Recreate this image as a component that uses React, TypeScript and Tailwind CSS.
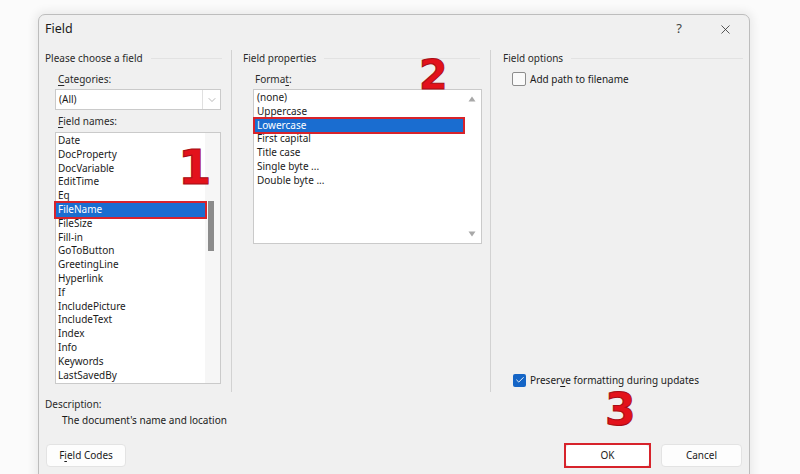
import React from 'react';
import { X, ChevronDown, Check } from 'lucide-react';

const fieldNames = [
  'Date', 'DocProperty', 'DocVariable', 'EditTime', 'Eq', 'FileName', 'FileSize', 'Fill-in',
  'GoToButton', 'GreetingLine', 'Hyperlink', 'If', 'IncludePicture', 'IncludeText', 'Index',
  'Info', 'Keywords', 'LastSavedBy',
];

const formats = ['(none)', 'Uppercase', 'Lowercase', 'First capital', 'Title case', 'Single byte ...', 'Double byte ...'];

const font = 'font-["Segoe_UI","Noto_Sans","Open_Sans",sans-serif]';
const bigNum =
  'absolute leading-none font-bold font-["DejaVu_Sans",sans-serif] text-[#e3121b] [-webkit-text-stroke:1px_#a90d14]';

const Item = ({ label, selected }: { label: string; selected: boolean }) => (
  <div
    className={`relative h-[13.8px] leading-[13.8px] pl-[2px] whitespace-nowrap ${
      selected ? 'bg-[#1a6dd0] text-white' : 'text-[#1b1b1b]'
    }`}
  >
    {label}
    {selected && <div className="absolute -inset-[2px] border-2 border-[#d7232b]" />}
  </div>
);

const GroupHeader = ({ title, className }: { title: string; className: string }) => (
  <div className={`flex h-[16px] items-center ${className}`}>
    <span className="text-[#2a2a2a]">{title}</span>
    <div className="ml-2 h-px flex-1 bg-[#e2e2e2]" />
  </div>
);

export default function App() {
  return (
    <div className={`relative h-[474px] w-[800px] overflow-hidden bg-[#fbfbfb] pl-[38px] pt-[14px] text-[10px] ${font}`}>
      <div className="flex h-[470px] w-[712px] flex-col rounded-t-[7px] border border-[#bdbdbd] bg-[#f0f0f0] shadow-[0_0_10px_3px_rgba(0,0,0,0.07)]">
        {/* title bar */}
        <div className="flex h-[28px] items-center pl-[6px] pr-[16px]">
          <span className="text-[12.5px] text-[#1b1b1b]">Field</span>
          <span className="ml-auto mr-[36px] text-[13px] text-[#444]">?</span>
          <X size={15} strokeWidth={1.3} className="text-[#333]" />
        </div>

        {/* columns */}
        <div className="flex h-[349px] pt-[7px]">
          {/* column 1 */}
          <div className="flex w-[193px] flex-col border-r border-[#d2d2d2]">
            <GroupHeader title="Please choose a field" className="pl-[6px] pr-[9px]" />
            <div className="mt-[5px] h-[16px] pl-[19px] leading-[16px] text-[#2a2a2a]">
              <u className="underline-offset-2">C</u>ategories:
            </div>
            <div className="ml-[16px] mt-[2px] flex h-[21px] w-[166px] border border-[#cacaca] bg-white">
              <span className="flex-1 pl-[3px] leading-[19px] text-[#1b1b1b]">(All)</span>
              <div className="flex w-[18px] items-center justify-center border-l border-[#e0e0e0]">
                <ChevronDown size={12} strokeWidth={1.2} className="text-[#8a8a8a]" />
              </div>
            </div>
            <div className="mt-[3px] h-[16px] pl-[19px] leading-[16px] text-[#2a2a2a]">
              <u className="underline-offset-2">F</u>ield names:
            </div>
            <div className="ml-[16px] mt-[3px] flex h-[252px] w-[166px] border border-[#cacaca] bg-white">
              <div className="flex-1 pt-[1px]">
                {fieldNames.map((n) => (
                  <Item key={n} label={n} selected={n === 'FileName'} />
                ))}
              </div>
              <div className="w-[15px] bg-[#f6f6f6] pl-[3px] pt-[68px]">
                <div className="h-[50px] w-[6px] bg-[#8b8b8b]" />
              </div>
            </div>
          </div>

          {/* column 2 */}
          <div className="flex w-[259px] flex-col border-r border-[#d2d2d2]">
            <GroupHeader title="Field properties" className="pl-[11px] pr-[10px]" />
            <div className="mt-[5px] h-[16px] pl-[23px] leading-[16px] text-[#2a2a2a]">
              Forma<u className="underline-offset-2">t</u>:
            </div>
            <div className="ml-[21px] mt-[2px] flex h-[155px] w-[229px] border border-[#cacaca] bg-white">
              <div className="flex-1 pl-[1px] pt-[1px]">
                {formats.map((n) => (
                  <Item key={n} label={n} selected={n === 'Lowercase'} />
                ))}
              </div>
              <div className="flex w-[18px] flex-col items-center justify-between bg-white py-[6px]">
                <svg width="8" height="6" viewBox="0 0 8 6">
                  <path d="M4 0.5 L7.5 5.5 L0.5 5.5 Z" fill="#a8a8a8" />
                </svg>
                <svg width="8" height="6" viewBox="0 0 8 6">
                  <path d="M0.5 0.5 L7.5 0.5 L4 5.5 Z" fill="#a8a8a8" />
                </svg>
              </div>
            </div>
          </div>

          {/* column 3 */}
          <div className="flex flex-1 flex-col pb-[5px]">
            <GroupHeader title="Field options" className="pl-[12px] pr-[6px]" />
            <div className="mt-[6px] flex h-[14px] items-center pl-[21px]">
              <div className="h-[14px] w-[14px] rounded-[2px] border border-[#8d8d8d] bg-[#fafafa]" />
              <span className="ml-[4px] text-[#1b1b1b]">Add path to filename</span>
            </div>
            <div className="mt-auto flex h-[14px] items-center pl-[22px]">
              <div className="flex h-[13px] w-[13px] items-center justify-center rounded-[2px] bg-[#1565c6]">
                <Check size={10} strokeWidth={2.2} className="text-white" />
              </div>
              <span className="ml-[4px] text-[#1b1b1b]">
                Preser<u className="underline-offset-2">v</u>e formatting during updates
              </span>
            </div>
          </div>
        </div>

        {/* description */}
        <div className="mt-[4px] h-[16px] pl-[6px] leading-[16px] text-[#2a2a2a]">Description:</div>
        <div className="h-[17px] pl-[23px] leading-[17px] text-[#1b1b1b]">The document's name and location</div>

        {/* buttons */}
        <div className="mt-[15px] flex h-[23px] pl-[7px] pr-[7px]">
          <div className="flex w-[80px] items-center justify-center rounded-[4px] border border-[#e3e3e3] bg-[#fdfdfd] text-[#1b1b1b]">
            F<u className="underline-offset-2">i</u>eld Codes
          </div>
          <div className="relative ml-auto flex w-[85px] items-center justify-center rounded-[4px] border border-[#dcdcdc] bg-white text-[#1b1b1b]">
            OK
            <div className="absolute -inset-[2px] border-2 border-[#d7232b]" />
          </div>
          <div className="ml-[11px] flex w-[81px] items-center justify-center rounded-[4px] border border-[#e3e3e3] bg-[#fdfdfd] text-[#1b1b1b]">
            Cancel
          </div>
        </div>
      </div>

      {/* step annotations */}
      <span className={`${bigNum} left-[178px] top-[143px] text-[48px]`}>1</span>
      <span className={`${bigNum} left-[419px] top-[55px] text-[41px]`}>2</span>
      <span className={`${bigNum} left-[605px] top-[388px] text-[44px]`}>3</span>
    </div>
  );
}
